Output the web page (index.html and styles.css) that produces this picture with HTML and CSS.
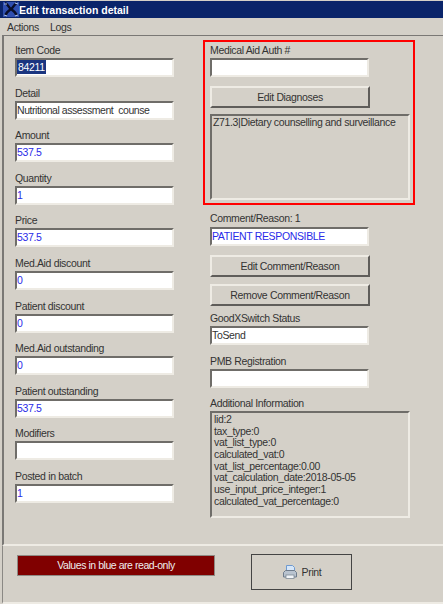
FILE: index.html
```html
<!DOCTYPE html>
<html lang="en">
<head>
  <meta charset="UTF-8">
  <title>Edit transaction detail</title>
  <link rel="stylesheet" href="styles.css">
</head>
<body>
  <div class="window">
    <div class="title-bar">
      <svg class="app-icon" width="16" height="15" viewBox="0 0 16 15">
        <rect width="16" height="15" fill="#2f4fb0"/>
        <path d="M2 1c3 1 3 4 6 6s5 4 6 7M14 1c-3 1-3 4-6 6s-5 4-6 7" fill="none" stroke="#0a0f2a" stroke-width="2.4"/>
        <path d="M1 2l3 0M12 1l3 1M1 13l3 1M12 14l3-1" stroke="#a9c4f2" stroke-width="1.2"/>
      </svg>
      <span>Edit transaction detail</span>
    </div>
    <div class="menu-bar">
      <span>Actions</span>
      <span>Logs</span>
    </div>
    <div class="main-panel">
      <div class="col-left">
        <div class="field"><label>Item Code</label><div class="input"><span class="selected">84211</span></div></div>
        <div class="field"><label>Detail</label><div class="input detail">Nutritional assessment&nbsp; counse</div></div>
        <div class="field"><label>Amount</label><div class="input blue">537.5</div></div>
        <div class="field"><label>Quantity</label><div class="input blue">1</div></div>
        <div class="field"><label>Price</label><div class="input blue">537.5</div></div>
        <div class="field"><label>Med.Aid discount</label><div class="input blue">0</div></div>
        <div class="field"><label>Patient discount</label><div class="input blue">0</div></div>
        <div class="field"><label>Med.Aid outstanding</label><div class="input blue">0</div></div>
        <div class="field"><label>Patient outstanding</label><div class="input blue">537.5</div></div>
        <div class="field"><label>Modifiers</label><div class="input"></div></div>
        <div class="field"><label>Posted in batch</label><div class="input blue">1</div></div>
      </div>
      <div class="col-right">
        <div class="highlight">
          <label>Medical Aid Auth #</label>
          <div class="input"></div>
          <button class="btn btn-diag">Edit Diagnoses</button>
          <div class="list list-diag">Z71.3|Dietary counselling and surveillance</div>
        </div>
        <div class="comment">
          <label>Comment/Reason: 1</label>
          <div class="input blue">PATIENT RESPONSIBLE</div>
          <button class="btn btn-edit">Edit Comment/Reason</button>
          <button class="btn btn-remove">Remove Comment/Reason</button>
        </div>
        <div class="field-r status"><label>GoodXSwitch Status</label><div class="input">ToSend</div></div>
        <div class="field-r"><label>PMB Registration</label><div class="input"></div></div>
        <div class="field-r info">
          <label>Additional Information</label>
          <div class="list list-info">
            <div>lid:2</div>
            <div>tax_type:0</div>
            <div>vat_list_type:0</div>
            <div>calculated_vat:0</div>
            <div>vat_list_percentage:0.00</div>
            <div>vat_calculation_date:2018-05-05</div>
            <div>use_input_price_integer:1</div>
            <div>calculated_vat_percentage:0</div>
          </div>
        </div>
      </div>
    </div>
    <div class="bottom-panel">
      <div class="notice">Values in blue are read-only</div>
      <button class="print-btn">
        <svg width="16" height="16" viewBox="0 0 16 16">
          <path d="M4.5 1.500h6l2 2v5h-8z" fill="#d6e6f8" stroke="#6f9ad0"/>
          <path d="M1.500 8.500l2-2h9l2 2v4.500h-13z" fill="#b9c3cf" stroke="#6f7c8c"/>
          <rect x="4" y="11" width="8" height="3.500" fill="#f2f5f9" stroke="#7f8a96" stroke-width=".8"/>
        </svg>
        <span>Print</span>
      </button>
    </div>
  </div>
</body>
</html>
```
FILE: styles.css
```css
html, body {
  margin: 0;
  padding: 0;
}
body {
  background: #d4d0c8;
  font-family: 'Liberation Sans', Arial, sans-serif;
  font-size: 10.5px;
  letter-spacing: -0.35px;
  color: #333;
}
.window {
  width: 443px;
  height: 604px;
  overflow: hidden;
  display: flex;
  flex-direction: column;
}
.title-bar {
  height: 17px;
  margin-top: 1px;
  background: #0a246a;
  color: #fff;
  font-weight: bold;
  font-size: 10.5px;
  letter-spacing: 0;
  display: flex;
  align-items: center;
  padding-left: 3px;
}
.app-icon {
  flex: none;
}
.menu-bar {
  height: 17px;
  display: flex;
  align-items: center;
  gap: 11px;
  padding-left: 7px;
}
.main-panel {
  height: 511px;
  margin-left: 2px;
  border-top: 1px solid #7a7875;
  border-left: 2px solid #7a7875;
  border-bottom: 2px solid #eeebe4;
  box-sizing: border-box;
  display: flex;
}
.col-left {
  width: 159px;
  margin-left: 11px;
  padding-top: 8px;
  display: flex;
  flex-direction: column;
  gap: 9.6px;
}
.field label, .field-r label, .highlight label, .comment label {
  display: block;
  height: 13px;
  line-height: 13px;
  margin-bottom: 1px;
}
.input {
  box-sizing: border-box;
  width: 159px;
  height: 19px;
  line-height: 15px;
  background: #fff;
  border-top: 2px solid #6f6d69;
  border-left: 2px solid #6f6d69;
  border-right: 2px solid #eeebe4;
  border-bottom: 2px solid #eeebe4;
  white-space: nowrap;
  overflow: hidden;
}
.detail {
  letter-spacing: -0.45px;
}
.blue {
  color: #2a2ae8;
}
.selected {
  background: #1a3580;
  color: #fff;
  padding: 1px 1px;
}
.col-right {
  margin-left: 36px;
  display: flex;
  flex-direction: column;
}
.highlight {
  box-sizing: border-box;
  width: 212px;
  height: 165px;
  margin-left: -7px;
  margin-top: 4px;
  padding: 2px 0 0 5px;
  border: 2px solid #f00;
}
.btn {
  display: block;
  box-sizing: border-box;
  width: 160px;
  height: 22px;
  padding: 0;
  background: #d4d0c8;
  color: #333;
  font: inherit;
  letter-spacing: inherit;
  border-top: 2px solid #eeebe4;
  border-left: 2px solid #eeebe4;
  border-right: 2px solid #5f5d5a;
  border-bottom: 2px solid #5f5d5a;
}
.btn-diag {
  margin-top: 9px;
}
.list {
  box-sizing: border-box;
  width: 200px;
  background: #d4d0c8;
  padding-left: 2px;
  border-top: 2px solid #6f6d69;
  border-left: 2px solid #6f6d69;
  border-right: 2px solid #eeebe4;
  border-bottom: 2px solid #eeebe4;
}
.list-diag {
  height: 86px;
  margin-top: 6px;
  padding-left: 1px;
  line-height: 12px;
  white-space: nowrap;
}
.comment {
  margin-top: 8px;
}
.comment label {
  margin-top: -1px;
  margin-bottom: 2px;
}
.btn-edit {
  margin-top: 9px;
}
.btn-remove {
  margin-top: 7px;
}
.status {
  margin-top: 6px;
}
.field-r {
  margin-bottom: 10px;
}
.info {
  margin-top: -1px;
}
.list-info {
  height: 107px;
  padding-top: 1px;
  line-height: 11.66px;
}
.bottom-panel {
  flex: 1;
  margin-left: 2px;
  display: flex;
  align-items: flex-start;
  padding-top: 9px;
  border-left: 1px solid #8a8884;
  border-bottom: 2px solid #eeebe4;
  box-sizing: border-box;
}
.notice {
  box-sizing: border-box;
  width: 198px;
  height: 21px;
  margin-left: 14px;
  background: #800000;
  color: #eee;
  border: 1px solid #8f8a84;
  text-align: center;
  letter-spacing: -0.45px;
  line-height: 18px;
}
.print-btn {
  box-sizing: border-box;
  width: 101px;
  height: 36px;
  margin-left: 36px;
  margin-top: -1px;
  background: #d4d0c8;
  border: 1px solid #444;
  font: inherit;
  letter-spacing: inherit;
  color: #333;
  display: flex;
  align-items: center;
  justify-content: center;
  gap: 4px;
  padding: 0;
}
```
